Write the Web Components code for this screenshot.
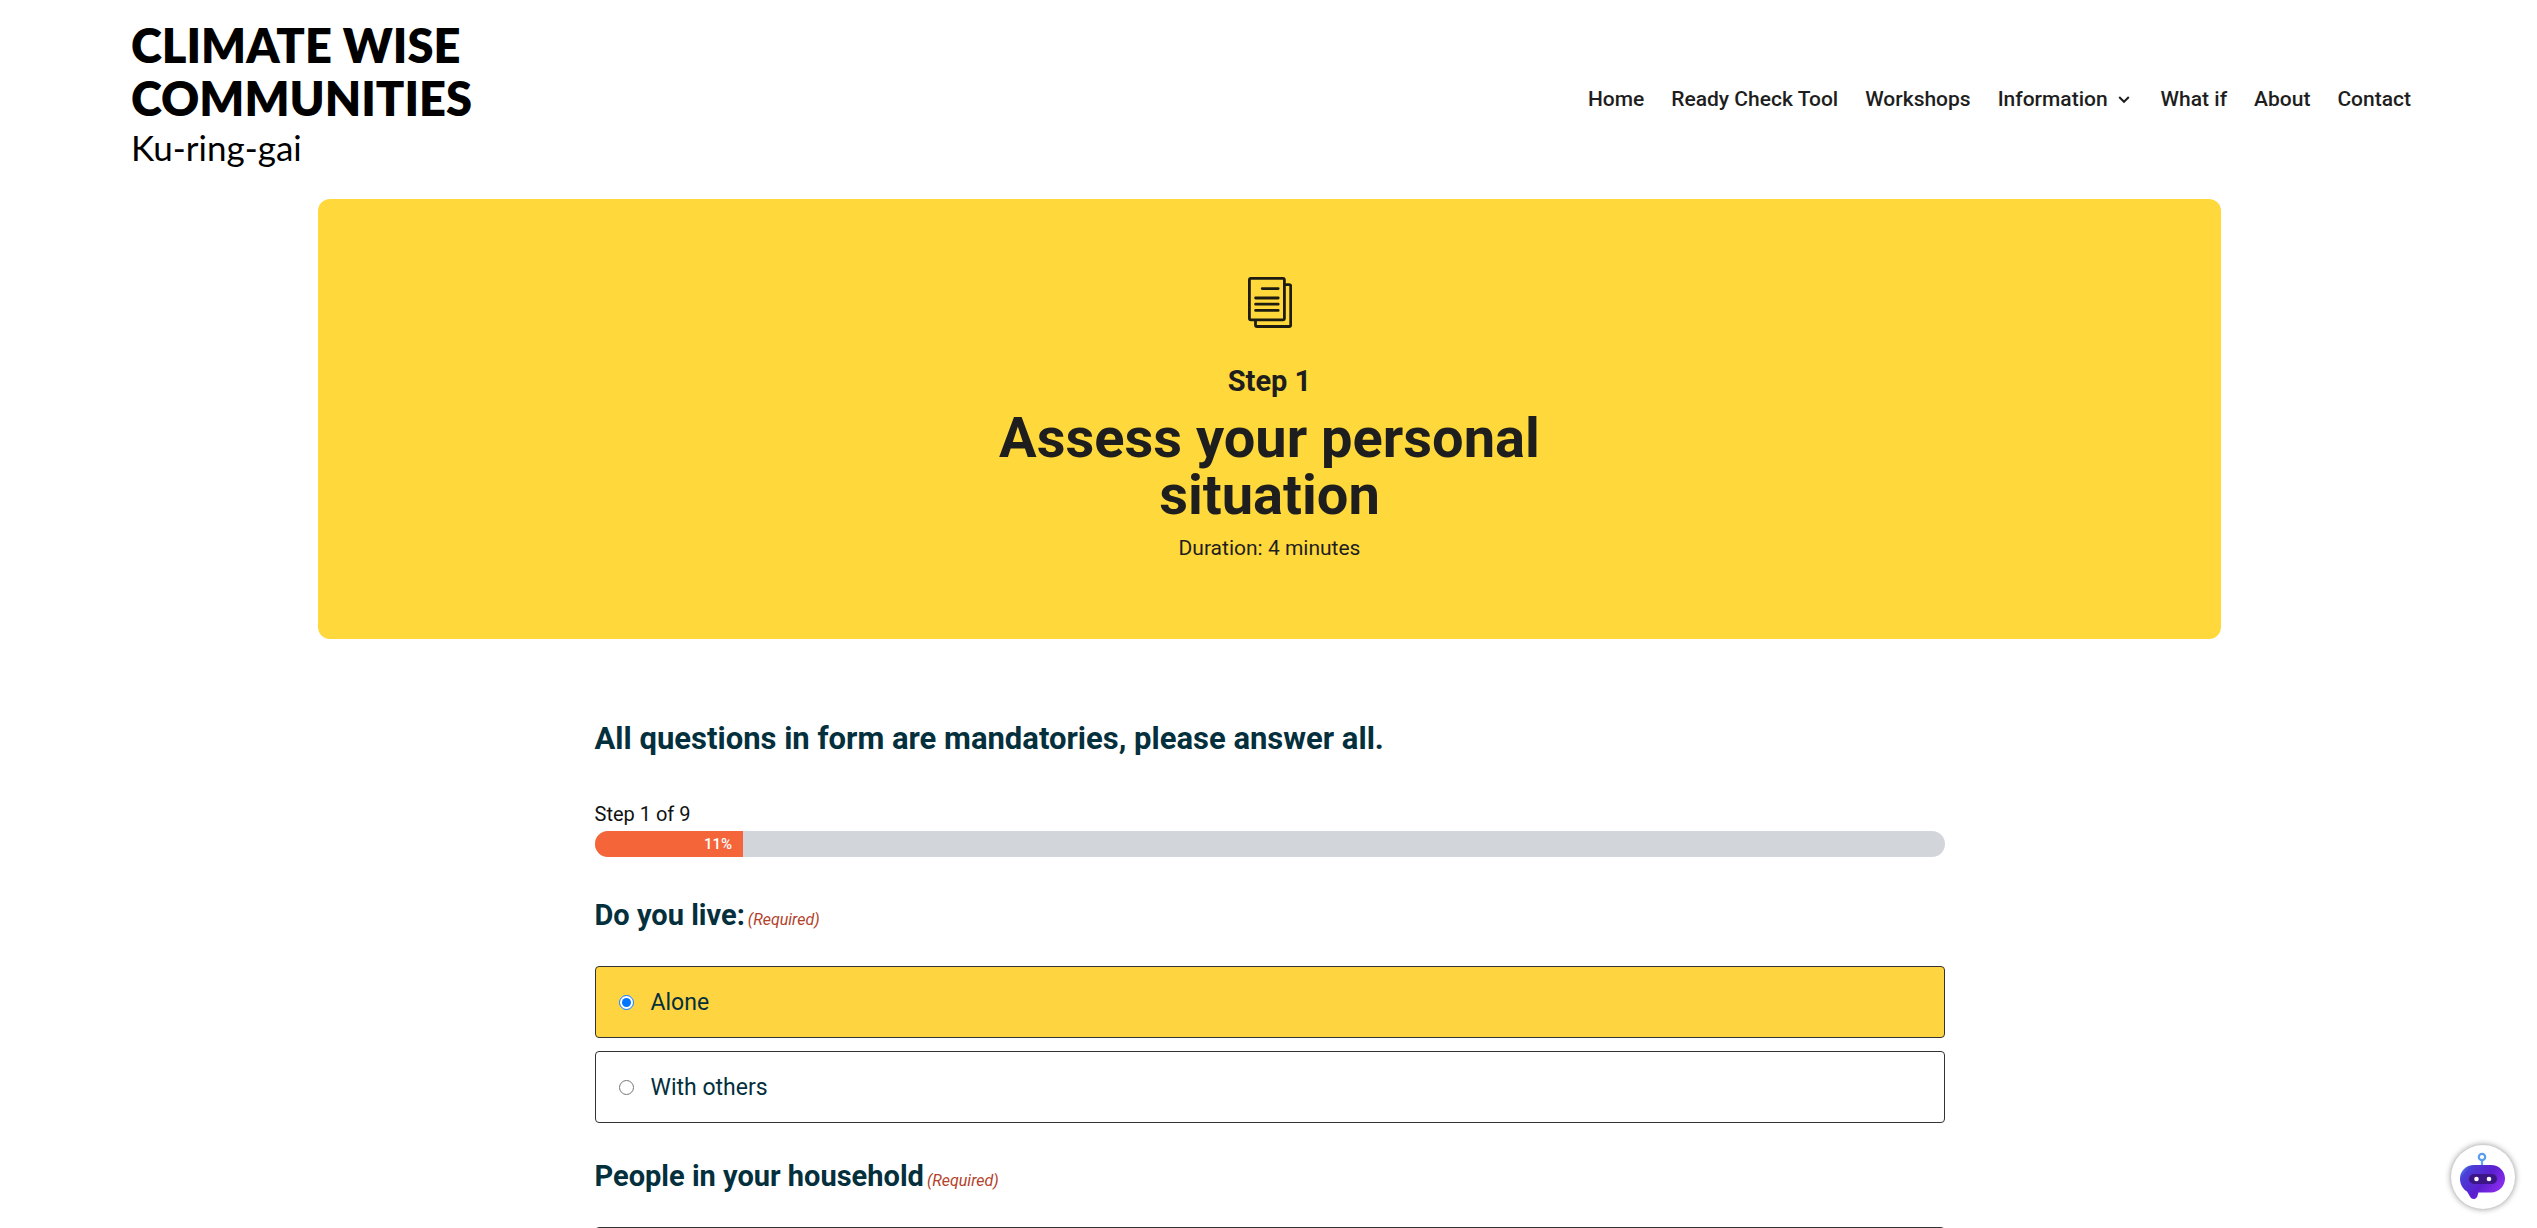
<!DOCTYPE html>
<html lang="en">
<head>
<meta charset="utf-8">
<title>Climate Wise Communities – Ready Check Tool</title>
<style>
  html, body { margin: 0; height: 100%; }
  body { background: #fff; color: #1e1e1e; font-family: Roboto, "Liberation Sans", sans-serif; overflow: hidden; }
</style>
</head>
<body>
<cw-page></cw-page>
<script>
class Base extends HTMLElement {
  connectedCallback() {
    if (this.shadowRoot) return;
    this.attachShadow({ mode: 'open' }).innerHTML =
      '<style>*{box-sizing:border-box}' + (this.css || '') + '</style>' + this.html();
  }
}

customElements.define('cw-logo', class extends Base {
  css = `
    :host { display: block; color: #000; font-family: Lato, "Open Sans", sans-serif; }
    a { display: block; color: inherit; text-decoration: none; }
    strong, span { display: block; white-space: nowrap; }
    strong { font-size: 47px; line-height: 53px; font-weight: 800; }
    span { font-size: 35px; line-height: 44px; }`;
  html() {
    return `<a href="#"><strong>CLIMATE WISE</strong><strong>COMMUNITIES</strong><span>Ku-ring-gai</span></a>`;
  }
});

customElements.define('cw-nav', class extends Base {
  css = `
    :host { display: block; padding-top: 10px; }
    nav { display: flex; gap: 27px; }
    a { display: flex; align-items: center; gap: 10px; color: #1e1e1e; text-decoration: none;
        font-size: 21px; line-height: 28px; font-weight: 500; white-space: nowrap; }
    svg { width: 12px; height: 9px; margin-right: 4px; }`;
  html() {
    const items = ['Home', 'Ready Check Tool', 'Workshops', 'Information', 'What if', 'About', 'Contact'];
    const chevron = '<svg viewBox="0 0 12 9" fill="none" stroke="#1e1e1e" stroke-width="2"><path d="M1.200 2l4.800 4.800L10.800 2"/></svg>';
    return '<nav>' + items.map(t => `<a href="#">${t}${t === 'Information' ? chevron : ''}</a>`).join('') + '</nav>';
  }
});

customElements.define('cw-header', class extends Base {
  css = `
    :host { display: block; }
    header { display: flex; justify-content: space-between; align-items: center;
             padding: 19px 126px 30px 131px; }`;
  html() { return `<header><cw-logo></cw-logo><cw-nav></cw-nav></header>`; }
});

customElements.define('cw-banner', class extends Base {
  css = `
    :host { display: block; }
    section { display: flex; flex-direction: column; align-items: center; text-align: center;
              background: #ffd83c; border-radius: 12px; padding: 78px 24px 76px; color: #1e1e1e; }
    svg { width: 44px; height: 51px; margin-bottom: 34px; }
    p { margin: 0; }
    .step { font-size: 29px; line-height: 38px; font-weight: 700; }
    h1 { margin: 10px 0; font-size: 56px; line-height: 57px; font-weight: 700; max-width: 620px; }
    .time { font-size: 21px; line-height: 29px; }`;
  html() {
    return `<section>
      <svg viewBox="0 0 44 51" fill="none" stroke="#1e1c10" stroke-width="2.8" stroke-linejoin="round" stroke-linecap="round" aria-hidden="true">
        <rect x="1.4" y="1.4" width="35" height="41.4" rx="1.5"/>
        <path d="M37 7.6h4.2a1.5 1.5 0 0 1 1.5 1.5v38.9a1.5 1.5 0 0 1-1.5 1.5H9a1.5 1.5 0 0 1-1.5-1.5v-4.6"/>
        <path d="M14.2 11.6h16M7.6 21h22.6M7.6 27.2h22.6M7.6 33.4h22.6"/>
      </svg>
      <p class="step"><slot name="step"></slot></p>
      <h1><slot></slot></h1>
      <p class="time"><slot name="time"></slot></p>
    </section>`;
  }
});

customElements.define('cw-progress', class extends Base {
  css = `
    :host { display: block; color: #111; }
    p { margin: 0 0 3px; font-size: 20px; line-height: 28px; }
    .bar { height: 26px; border-radius: 13px; background: #d2d5da; overflow: hidden; }
    .fill { width: 11%; height: 100%; background: #f5653a; color: #fff; text-align: right;
            padding-right: 11px; font-size: 15px; line-height: 26px; font-weight: 500; }`;
  html() {
    return `<p>Step 1 of 9</p><div class="bar" role="progressbar" aria-valuenow="11" aria-label="Progress"><div class="fill">11%</div></div>`;
  }
});

customElements.define('cw-question', class extends Base {
  css = `
    :host { display: block; color: #03303c; }
    fieldset { border: 0; margin: 0; padding: 0; min-width: 0; }
    legend, .title { display: flex; align-items: baseline; gap: 3px; padding: 0; margin: 0 0 31px;
             font-size: 29px; line-height: 40px; font-weight: 700; }
    i { font-size: 16px; line-height: 20px; font-weight: 400; color: #b3412a; }
    .choices { display: flex; flex-direction: column; gap: 13px; }
    .choice { display: flex; align-items: center; gap: 17px; height: 72px; padding: 0 23px;
              border: 1px solid #333; border-radius: 4px; font-size: 23px; cursor: pointer; }
    .choice:has(:checked) { background: #ffd441; }
    .choice input { width: 15px; height: 15px; margin: 0; }
    .text { display: block; width: 100%; height: 72px; border: 1px solid #333; border-radius: 4px; font: inherit; }`;
  html() {
    const req = '<i>(Required)</i>';
    const title = this.getAttribute('heading');
    if (!this.hasAttribute('options')) {
      return `<label class="title" for="t">${title}${req}</label><input id="t" class="text" type="text">`;
    }
    return `<fieldset><legend>${title}${req}</legend><div class="choices">` +
      this.getAttribute('options').split('|').map((o, i) =>
        `<label class="choice"><input type="radio" name="q"${i ? '' : ' checked'}><span>${o}</span></label>`).join('') +
      `</div></fieldset>`;
  }
});

customElements.define('cw-chat', class extends Base {
  css = `
    :host { position: fixed; right: 22px; bottom: 19px; }
    button { display: grid; place-items: center; width: 64px; height: 64px; padding: 0; border: 0;
             border-radius: 50%; background: #fff; box-shadow: 0 0 6px rgba(0,0,0,.45); cursor: pointer; }
    svg { width: 64px; height: 64px; }`;
  html() {
    return `<button aria-label="Open chat"><svg viewBox="0 0 64 64">
      <defs>
        <linearGradient id="g" x1="0" y1="0" x2="1" y2=".6"><stop offset="0" stop-color="#58aaf8"/><stop offset=".2" stop-color="#4a3fd6"/><stop offset=".6" stop-color="#5a1fcf"/><stop offset="1" stop-color="#8f2df0"/></linearGradient>
      </defs>
      <path d="M31 15v7" stroke="#62a6f3" stroke-width="2.2"/>
      <circle cx="31" cy="12" r="3.2" fill="#fff" stroke="#5a9cf0" stroke-width="2.2"/>
      <path d="M23 20h17c8 0 14 6 14 13.500s-6 14-14 14H27.500c-.8 1.600-.6 3-1.500 4.600-1.700 2.900-5.500 2.400-6.700 0L16 46.500C11.800 44 9 39.500 9 33.500 9 26 15 20 23 20z" fill="url(#g)"/>
      <rect x="18" y="29" width="28" height="10" rx="5" fill="#3c1687"/>
      <circle cx="25.500" cy="34" r="2.300" fill="#fff"/><circle cx="38" cy="34" r="2.300" fill="#fff"/>
    </svg></button>`;
  }
});

customElements.define('cw-page', class extends Base {
  css = `
    :host { display: block; height: 100vh; overflow: hidden; }
    main { padding-left: 2px; }
    cw-banner { width: 75.1%; margin: 0 auto; }
    form { width: 1350px; max-width: 90%; margin: 80px auto 0; }
    h2 { margin: 0 0 41px; font-size: 31px; line-height: 40px; font-weight: 700; color: #03303c; }
    cw-progress { margin-bottom: 38px; }
    cw-question { margin-bottom: 33px; }`;
  html() {
    return `<cw-header></cw-header>
    <main>
      <cw-banner><span slot="step">Step 1</span>Assess your personal situation<span slot="time">Duration: 4 minutes</span></cw-banner>
      <form>
        <h2>All questions in form are mandatories, please answer all.</h2>
        <cw-progress></cw-progress>
        <cw-question heading="Do you live:" options="Alone|With others"></cw-question>
        <cw-question heading="People in your household"></cw-question>
      </form>
    </main>
    <cw-chat></cw-chat>`;
  }
});
</script>
</body>
</html>
